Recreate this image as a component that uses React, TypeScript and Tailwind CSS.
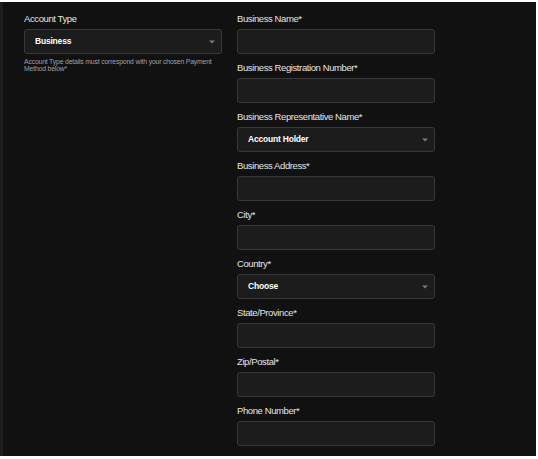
import React from "react";

const Caret = () => (
  <svg width="6" height="4" viewBox="0 0 6 4" className="absolute right-[6px] top-1/2 -translate-y-1/2">
    <path d="M0 0.5 H6 L3 3.5 Z" fill="#7a7a7a" />
  </svg>
);

const Label = ({ children }: { children: React.ReactNode }) => (
  <div className="h-[12px] text-[9.5px] leading-[12px] tracking-[-0.4px] text-[#e4e4e4]">{children}</div>
);

const Input = () => (
  <div className="mt-[4px] h-[25px] rounded-[3px] border border-[#383838] bg-[#1c1c1c]" />
);

const Select = ({ value }: { value: string }) => (
  <div className="relative mt-[4px] flex h-[25px] items-center rounded-[3px] border border-[#383838] bg-[#1c1c1c] pl-[10px]">
    <span className="text-[8.5px] font-bold tracking-[-0.2px] text-white">{value}</span>
    <Caret />
  </div>
);

const Field = ({ label, select }: { label: string; select?: string }) => (
  <div className="h-[49px]">
    <Label>{label}</Label>
    {select ? <Select value={select} /> : <Input />}
  </div>
);

export default function App() {
  return (
    <div className="h-[459px] w-[538px] bg-white pt-[2px] pr-[2px] pb-[3px]" style={{ fontFamily: '"Liberation Sans", Arial, sans-serif' }}>
      <div className="flex h-full border-l-[3px] border-[#1e1e1e] bg-[#111111]">
        <div className="grid h-full w-full grid-cols-[198px_198px] gap-x-[15px] pl-[21px] pt-[11px]">
          <div>
            <Label>Account Type</Label>
            <Select value="Business" />
            <div className="mt-[4px] w-[200px] text-[6.8px] leading-[7px] tracking-[-0.15px] text-[#a0a0a0]">
              Account Type details must correspond with your chosen Payment Method below*
            </div>
          </div>
          <div className="flex flex-col">
            <Field label="Business Name*" />
            <Field label="Business Registration Number*" />
            <Field label="Business Representative Name*" select="Account Holder" />
            <Field label="Business Address*" />
            <Field label="City*" />
            <Field label="Country*" select="Choose" />
            <Field label="State/Province*" />
            <Field label="Zip/Postal*" />
            <Field label="Phone Number*" />
          </div>
        </div>
      </div>
    </div>
  );
}
